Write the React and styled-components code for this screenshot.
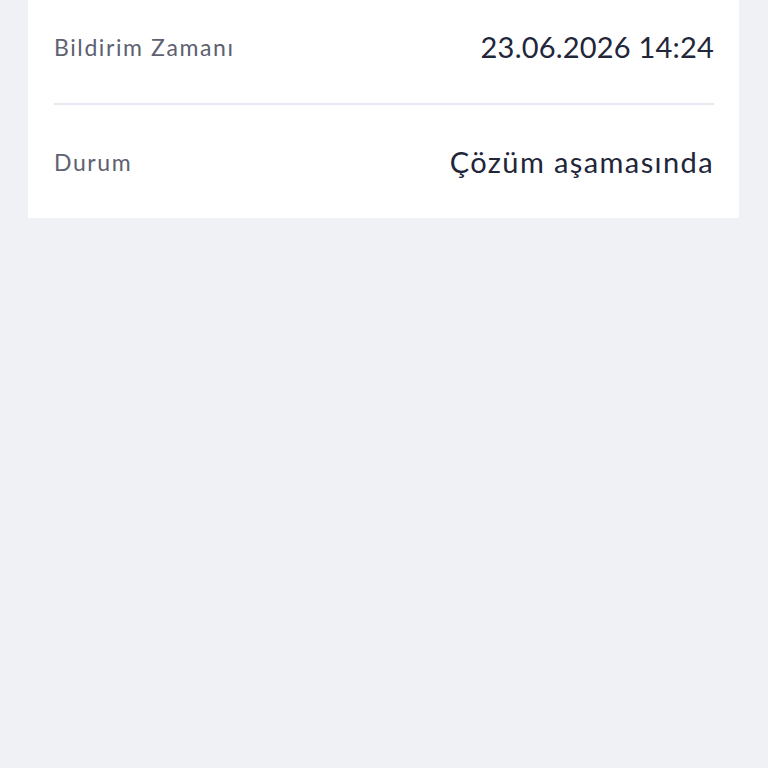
import styled, { createGlobalStyle } from "styled-components"

const Global = createGlobalStyle`
  html, body {
    margin: 0;
    padding: 0;
    background: #f0f1f5;
    font-family: Lato, "Noto Sans", sans-serif;
  }
  #root {
    min-height: 768px;
  }
`

const Page = styled.div`
  height: 768px;
  overflow: hidden;
  background: #f0f1f5;
`

const Card = styled.div`
  margin: -10px 29px 0 28px;
  padding: 0 25px 0 26px;
  background: #ffffff;
`

const Row = styled.div`
  display: flex;
  align-items: center;
  justify-content: space-between;
  height: ${p => p.$h}px;
  border-bottom: ${p => (p.$last ? "none" : "2px solid #e7e8f1")};
`

const Label = styled.span`
  font-size: 23px;
  color: #5d6171;
  letter-spacing: 1.6px;
`

const Value = styled.span`
  font-size: 29px;
  color: #22263a;
  letter-spacing: ${p => p.$ls}px;
`

const rows = [
  { label: "Bildirim Zamanı", value: "23.06.2026 14:24", h: 113, ls: 0.2 },
  { label: "Durum", value: "Çözüm aşamasında", h: 113, ls: 1.4 },
]

const App = () => {
  return (
    <Page>
      <Global />
      <Card>
        {rows.map((r, i) => (
          <Row key={r.label} $h={r.h} $last={i === rows.length - 1}>
            <Label>{r.label}</Label>
            <Value $ls={r.ls}>{r.value}</Value>
          </Row>
        ))}
      </Card>
    </Page>
  )
}

export default App
